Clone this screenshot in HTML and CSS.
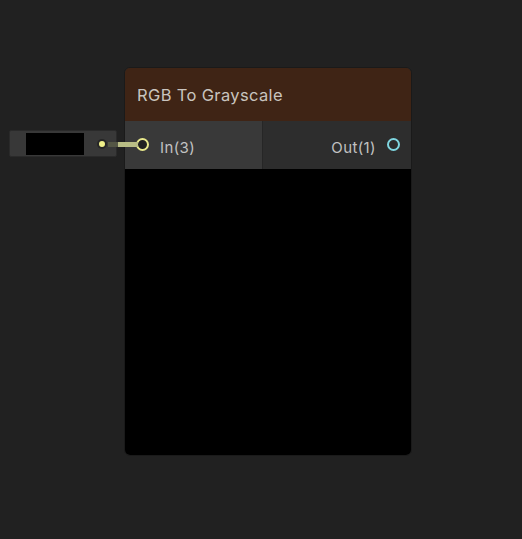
FILE: index.html
```html
<!DOCTYPE html>
<html lang="en">
<head>
    <meta charset="UTF-8">
    <title>RGB To Grayscale</title>
    <link rel="stylesheet" href="styles.css">
</head>
<body>
    <div class="canvas">
        <div class="field">
            <div class="swatch"></div>
            <div class="field-port"></div>
        </div>
        <div class="edge">
            <div class="edge-dim"></div>
            <div class="edge-bright"></div>
        </div>

        <div class="node">
            <div class="node-title">RGB To Grayscale</div>
            <div class="ports">
                <div class="inputs">
                    <div class="port">
                        <span class="port-dot in"></span>
                        <span class="port-label">In(3)</span>
                    </div>
                </div>
                <div class="outputs">
                    <div class="port">
                        <span class="port-label">Out(1)</span>
                        <span class="port-dot out"></span>
                    </div>
                </div>
            </div>
            <div class="preview"></div>
        </div>
    </div>
</body>
</html>
```

FILE: styles.css
```css
body {
    margin: 0;
    background-color: #212121;
    font-family: 'Inter', 'Noto Sans', sans-serif;
    color: #c4c4c4;
}
.canvas {
    position: relative;
    width: 522px;
    height: 539px;
    overflow: hidden;
}
.node {
    position: absolute;
    left: 124px;
    top: 67px;
    width: 286px;
    display: flex;
    flex-direction: column;
    border: 1px solid #1a1a1a;
    border-radius: 6px;
    overflow: hidden;
    background-color: #2d2d2d;
}
.node-title {
    height: 53px;
    display: flex;
    align-items: center;
    padding-left: 12px;
    background-color: #3f2415;
    font-size: 16.5px;
    letter-spacing: 0.35px;
    color: #c9c4bf;
}
.ports {
    display: flex;
    height: 48px;
}
.inputs {
    width: 137px;
    background-color: #393939;
    border-right: 1px solid #262626;
    display: flex;
    align-items: center;
}
.outputs {
    flex: 1;
    background-color: #2d2d2d;
    display: flex;
    align-items: center;
    justify-content: flex-end;
}
.port {
    display: flex;
    align-items: center;
    font-size: 15px;
    letter-spacing: 0.4px;
    padding-top: 4px;
}
.inputs .port {
    padding-left: 11px;
    gap: 11px;
}
.outputs .port {
    padding-right: 11px;
    gap: 11px;
}
.port-dot {
    width: 9px;
    height: 9px;
    border-radius: 50%;
    border: 2px solid;
    background-color: #222;
    margin-top: -6px;
}
.port-dot.in {
    border-color: #e8e88c;
}
.port-dot.out {
    border-color: #7fd6e0;
    background-color: transparent;
}
.port-label {
    color: #c2c2c2;
}
.preview {
    height: 286px;
    background-color: #000;
}
.field {
    position: absolute;
    left: 9px;
    top: 130px;
    width: 106px;
    height: 25px;
    background-color: #383838;
    border: 1px solid #2a2a2a;
    border-radius: 2px;
    display: flex;
    align-items: center;
    z-index: 2;
}
.swatch {
    margin-left: 16px;
    width: 58px;
    height: 22px;
    background-color: #000;
}
.field-port {
    margin-left: 15px;
    width: 6px;
    height: 6px;
    border-radius: 50%;
    background-color: #f0f08a;
    box-shadow: 0 0 0 2px #262626;
}
.edge {
    position: absolute;
    left: 108px;
    top: 142px;
    display: flex;
    height: 5px;
    z-index: 3;
}
.edge-dim {
    width: 10px;
    background-color: #545645;
}
.edge-bright {
    width: 20px;
    background-color: #b9bd85;
}
```
